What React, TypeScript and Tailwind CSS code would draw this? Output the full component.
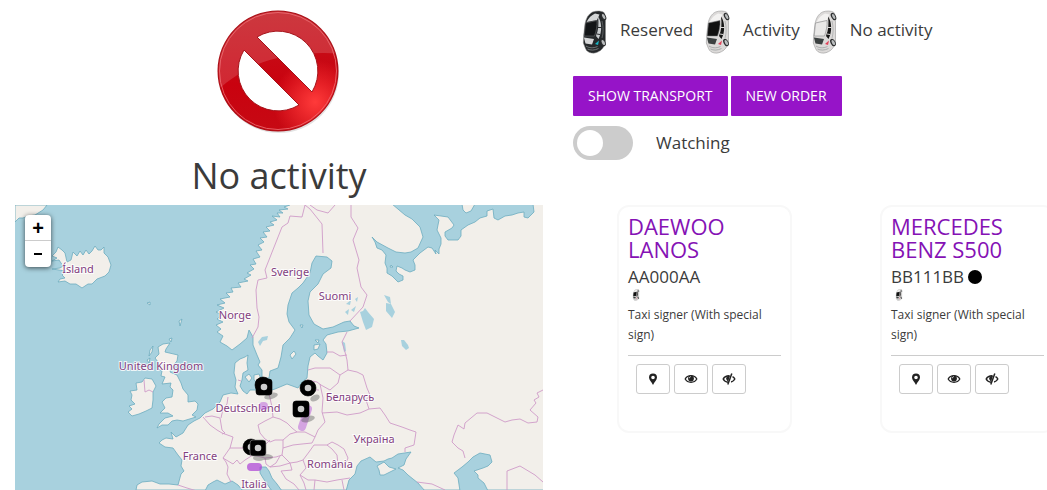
import { useState } from "react";

const LAND = [
  // continental Europe and Scandinavia
  "M290 205 L284 207 288 209 279 210 283 213 277 213 280 217 272 216 277 220 270 222 274 225 266 227 270 231 263 232 267 237 260 238 264 242 258 245 262 250 256 251 260 257 253 259 256 264 250 265 254 269 247 273 251 275 244 279 248 281 238 283 241 287 231 288 233 292 226 293 230 297 220 299 225 303 217 305 224 308 216 312 222 315 217 319 223 322 216 325 221 329 217 332 223 336 220 342 227 346 232 350 240 344 247 338 249 330 253 337 253 345 257 355 260 362 258 365 262 370 262 378 269 378 270 371 278 368 281 357 283 345 290 338 295 330 289 322 287 314 288 305 292 293 298 288 303 283 310 273 312 263 316 256 327 257 332 261 331 268 323 274 318 284 310 292 308 301 309 315 314 324 323 329 333 327 344 322 350 321 354 326 359 328 348 331 338 332 327 335 323 340 326 344 327 353 323 360 318 356 315 353 310 357 308 366 307 378 302 382 298 388 287 384 275 389 263 393 257 390 250 390 247 394 243 391 240 386 242 380 243 373 248 370 247 363 248 355 245 357 240 359 235 363 234 373 236 380 235 387 238 394 231 393 223 395 220 402 213 409 205 413 200 418 194 421 188 425 183 433 176 437 171 432 173 439 166 438 162 440 159 443 165 447 173 448 178 455 182 460 181 466 184 471 181 474 178 485 169 484 160 484 152 481 142 482 137 485 136 490 L545 490 545 203 290 203Z",
  // Great Britain, Ireland, Iceland, Greenland
  "M158 347 L163 344 170 343 166 349 165 352 178 355 177 361 172 367 170 372 177 375 181 383 183 389 188 395 188 402 195 401 198 404 197 410 192 415 196 417 183 421 177 420 172 421 168 425 162 425 157 428 159 424 165 418 173 416 168 413 160 413 165 408 162 402 166 398 172 397 173 390 170 387 171 383 162 384 165 377 161 376 162 371 157 368 158 362 155 358 159 354Z",
  "M136 383 L142 382 145 378 152 379 156 386 153 392 153 400 152 408 146 411 139 414 132 416 128 412 132 409 129 406 135 404 131 400 132 395 130 391 137 390Z",
  "M52 256 L56 252 58 247 62 250 65 253 67 262 71 260 73 252 77 256 80 251 83 255 86 250 89 254 92 251 95 246 98 250 101 250 104 247 104 253 108 257 111 265 109 272 105 276 97 279 92 284 88 284 82 288 76 284 70 284 65 281 58 282 60 279 65 278 62 275 66 271 52 269 60 268 63 266 59 260 52 261 57 258Z",
  "M15 205 L47 205 43 210 35 215 28 216 23 218 19 218 15 222Z",
  // islands
  "M245 377 L249 374 252 378 249 382Z M254 375 L259 374 261 379 258 383 254 380Z M290 355 L294 351 296 354 292 359Z M314 345 L320 344 318 349 314 350Z M315 340 L319 340 318 343Z M150 350 L153 346 152 352 149 356Z M147 360 L150 358 149 363Z M179 321 L182 319 180 326Z M169 339 L172 338 171 342Z M147 303 L150 302 150 305Z M300 325 L303 325 302 328Z",
];

const WATER = [
  // White Sea and Barents Sea
  "M392 204 L405 215 412 219 420 227 423 237 418 248 411 252 405 253 396 252 388 248 377 242 372 237 375 242 377 248 382 250 386 255 385 263 387 268 387 273 392 276 398 282 403 280 403 276 399 274 396 271 397 266 402 268 405 270 410 272 415 270 415 265 413 260 420 253 428 247 432 248 436 254 435 250 439 254 439 249 441 244 441 238 437 230 439 220 434 215 441 216 448 217 454 225 452 228 445 232 445 236 448 240 458 240 461 236 461 230 468 225 475 222 480 218 487 216 487 211 493 209 494 218 498 220 505 216 512 215 518 213 524 212 524 217 528 218 534 212 533 204Z",
  // Black Sea and Azov
  "M370 457 L376 462 384 461 388 459 392 458 398 454 411 452 406 459 404 465 398 468 403 470 408 475 418 483 425 491 346 491 349 480 355 474 357 466 361 461Z",
  // Mediterranean and Adriatic
  "M205 491 L208 485 213 482 217 480 225 484 232 481 238 485 243 491Z",
  "M260 467 L266 467 269 471 272 478 277 484 282 491 272 491 267 484 263 478 260 473Z",
  // Caspian
  "M462 467 L468 462 473 457 480 453 490 455 492 462 488 466 483 468 474 471 478 475 478 478 484 483 488 491 460 491 458 478 454 473Z",
];

const LAKES = [
  "M360 312 L363 311 365 308 368 312 374 319 372 327 366 330 363 322Z",
  "M384 295 L390 297 391 304 388 302Z M386 303 L391 304 395 312 392 318 386 311Z",
  "M401 340 L404 340 408 345 409 348 406 350 402 346Z",
  "M258 342 L262 337 268 336 267 340 263 341 260 346Z",
  "M342 341 L345 343 346 351 344 352Z",
  "M346 304 L351 300 350 305Z M351 310 L356 306 354 312Z M345 312 L349 309 348 315Z M355 299 L358 297 357 302Z",
];

const BORDERS = [
  "M305 205 L302 217 290 216 288 223 282 227 265 270 267 278 258 280 256 290 257 308 259 317 258 327 252 338",
  "M305 205 L310 209 322 224 323 253 M310 205 L317 210 328 213 335 205",
  "M351 205 L351 217 358 228 353 240 359 260 357 268 361 287 367 295 363 307 350 321",
  "M327 352 L333 352 340 356 347 355 M347 332 L342 342 345 352 347 360 348 370",
  "M308 370 L315 368 330 368 340 375 348 370 357 372 363 375 367 388 370 395 366 400 369 409",
  "M340 375 L338 383 330 390 321 385 317 382 307 380 M302 389 L319 390",
  "M320 384 L323 398 322 412 325 422 318 430 315 437",
  "M322 413 L337 412 347 415 360 413 369 409 380 408 385 415 390 423 402 427 410 430 416 432 414 445 405 448 405 452",
  "M268 390 L270 398 272 407 273 417 280 419 287 423 292 428 297 432",
  "M273 417 L265 421 258 425 260 433 265 439 270 442 275 440 283 440 290 434 297 432 305 432 315 437 312 443 302 444 293 445 283 448 283 440",
  "M283 448 L282 455 290 463 297 462 303 460 309 452 314 445 327 445 332 449 337 455 338 465 344 465",
  "M327 445 L332 442 338 445 344 449 348 458 345 465",
  "M303 460 L306 468 300 475 308 480 315 480 327 482 337 480 350 478 M300 475 L304 483 306 490",
  "M315 480 L314 490 M342 480 L344 490",
  "M203 417 L210 425 217 430 222 433 233 437 230 448 223 458 226 462 228 467 227 474 231 482",
  "M205 417 L212 416 220 418 222 430 M228 397 L227 404 223 409 221 418 M222 430 L225 433 222 434",
  "M230 448 L238 448 245 448 248 453 253 455 245 460 240 464 237 460 233 464 223 458",
  "M245 448 L255 450 264 446 270 440 M253 455 L265 458 276 457 282 455",
  "M265 458 L266 464 270 467 276 463 280 456 M270 467 L280 466 290 463 292 470 281 471 286 479 294 484 299 490",
  "M238 380 L241 381",
  "M543 390 L537 393 539 397 534 400 536 403 530 410 538 417 537 422 528 423 520 419 512 420 505 422 487 413 477 413 465 423 464 429 458 425 454 435 452 442 458 448 463 451 465 458",
  "M507 490 L507 471 520 466 535 475 543 482 M417 482 L432 484 445 490",
  "M144 380 L145 392 149 390 153 392 M178 485 L187 488 197 491",
];

const LABELS = [
  { x: 78, y: 273, text: "Ísland" },
  { x: 290, y: 276, text: "Sverige" },
  { x: 335, y: 300, text: "Suomi" },
  { x: 235, y: 319, text: "Norge" },
  { x: 161, y: 370, text: "United Kingdom" },
  { x: 350, y: 401, text: "Беларусь" },
  { x: 248, y: 412, text: "Deutschland" },
  { x: 374, y: 443, text: "Україна" },
  { x: 200, y: 460, text: "France" },
  { x: 330, y: 468, text: "România" },
  { x: 254, y: 488, text: "Italia" },
];

const MARKERS = [
  { x: 263, y: 385, round: true },
  { x: 264, y: 387, round: false },
  { x: 308, y: 388, round: true },
  { x: 301, y: 409, round: false },
  { x: 251, y: 447, round: true },
  { x: 258, y: 448, round: false },
];

const CAR_COLORS = {
  reserved: { body: "#26292b", roof: "#131517", rear: "#d4d6d7", side: "#c9ccce", front: "#d7d8d9", lamp: "#18b4c4" },
  active: { body: "#dcdad9", roof: "#111111", rear: "#f3f2f1", side: "#161616", front: "#3c4141", lamp: "#e2435a" },
  idle: { body: "#dcdad9", roof: "#e9e8e7", rear: "#f3f2f1", side: "#161616", front: "#3c4141", lamp: "#e2435a" },
};

type CarKind = keyof typeof CAR_COLORS;

const LEGEND: { kind: CarKind; label: string }[] = [
  { kind: "reserved", label: "Reserved" },
  { kind: "active", label: "Activity" },
  { kind: "idle", label: "No activity" },
];

const VEHICLES = [
  { name: "DAEWOO LANOS", plate: "AA000AA", color: "" },
  { name: "MERCEDES BENZ S500", plate: "BB111BB", color: "black" },
];

const Car = ({ kind, className }: { kind: CarKind; className: string }) => {
  const c = CAR_COLORS[kind];
  return (
    <svg viewBox="0 0 24 44" className={className} aria-hidden="true">
      <path d="M2.500 14C3.500 8 6 4 10 2 14 .5 19 .7 21.500 2.500c1.500 2 1.500 5 1.500 8L23 31c-.5 4-2 7-5 9.500-3 2-6 3-9 2.500C6 42.500 4 41 3 38.500L.8 33 1.200 25Z" fill={c.body} stroke="#8b8b8b" strokeWidth=".5" />
      <path d="M4 12C6 8 9 5 12.500 3.500L17 4.500 14.500 10Z" fill={c.rear} />
      <path d="M3 13 14.500 10.500c.5 5-.8 10.500-2.500 15.500H1.700Z" fill={c.roof} stroke="#77797a" strokeWidth=".5" />
      <path d="M1.400 27.500 11.500 29 9.500 34.500 3 33.500Z" fill={c.front} />
      <path d="M15.500 6.500c3.700 5 4.500 15 .5 22.500l-2.500-3c2.500-6 3-12 2-19.500Z" fill={c.side} />
      <path d="M15.500 17.500h3.500M14.500 24l3 .5" stroke={c.body} strokeWidth="1" />
      <path d="M19.500 11c1.500 6 1.500 12 0 17" fill="none" stroke="#8d9092" strokeWidth=".5" />
      <path d="M3.500 36c3 2 7 2.500 11.500.5M5 39c3 1.500 7 1.500 11-.5" fill="none" stroke="#94989a" strokeWidth=".7" />
      <path d="M12.500 34 16.500 30.500 15.500 35Z" fill={c.lamp} />
      <ellipse cx="21" cy="6.500" rx="2.300" ry="4" fill="#2d2f30" transform="rotate(-28 21 6.500)" />
      <ellipse cx="21.200" cy="6.500" rx="1.300" ry="2.700" fill="#b9bcbd" transform="rotate(-28 21.200 6.500)" />
      <ellipse cx="20.500" cy="32.500" rx="2.400" ry="4" fill="#2d2f30" transform="rotate(-28 20.500 32.500)" />
      <ellipse cx="20.800" cy="32.500" rx="1.400" ry="2.800" fill="#b9bcbd" transform="rotate(-28 20.800 32.500)" />
    </svg>
  );
};

const NoActivitySign = () => (
  <svg viewBox="0 0 126 126" className="size-[126px]" aria-hidden="true">
    <defs>
      <linearGradient id="red" x1="0" y1="0" x2="0" y2="1">
        <stop offset="0" stopColor="#c4161e" />
        <stop offset=".6" stopColor="#c9020f" />
        <stop offset="1" stopColor="#c60a14" />
      </linearGradient>
      <radialGradient id="glow" cx="99" cy="93" r="42" gradientUnits="userSpaceOnUse">
        <stop offset="0" stopColor="#ff3a3a" />
        <stop offset="1" stopColor="#ff3a3a" stopOpacity="0" />
      </radialGradient>
      <clipPath id="disc">
        <circle cx="62" cy="62" r="59.500" />
      </clipPath>
    </defs>
    <circle cx="63" cy="64" r="60" fill="#e3e3e3" />
    <circle cx="62" cy="62" r="60.500" fill="#a80f16" />
    <g clipPath="url(#disc)">
      <rect width="126" height="126" fill="url(#red)" />
      <rect width="126" height="126" fill="url(#glow)" />
      <path d="M0 0H126V45C100 42 62 46 40 56 24 63 12 72 3 80Z" fill="white" opacity=".15" />
      <circle cx="62" cy="62" r="58.500" fill="none" stroke="#ee7277" strokeWidth="1" opacity=".8" />
    </g>
    <g fill="white" stroke="#a5141b" strokeWidth="1" strokeLinejoin="round">
      <path d="M41 28A40 40 0 0 1 96 83Z" />
      <path d="M28 41A40 40 0 0 0 83 96Z" />
    </g>
  </svg>
);

const EuropeMap = () => (
  <div className="relative w-full">
    <svg viewBox="15 205 528 285" className="block w-full" role="img" aria-label="Map of Europe">
      <rect x="15" y="205" width="528" height="285" fill="#a8d1de" />
      <g stroke="#6cacbf" strokeWidth=".8" strokeLinejoin="round">
        {LAND.map((d) => (
          <path key={d} d={d} fill="#f2efea" />
        ))}
        {WATER.map((d) => (
          <path key={d} d={d} fill="#a8d1de" />
        ))}
        <path d="M377 466 384 462 389 467 396 469 390 472 384 475 380 475 379 470Z M462 204 463 210 466 213 471 211 475 204Z M391 265 393 267 390 267Z" fill="#f2efea" />
      </g>
      {LAKES.map((d) => (
        <path key={d} d={d} fill="#a8d1de" />
      ))}
      {BORDERS.map((d) => (
        <path key={d} d={d} fill="none" stroke="#cf9bc8" strokeWidth=".9" strokeLinejoin="round" />
      ))}
      {LABELS.map((label) => (
        <text
          key={label.text}
          x={label.x}
          y={label.y}
          textAnchor="middle"
          className="fill-[#83407f] stroke-white/80 stroke-2 font-['Noto_Sans',sans-serif] text-[11px] [paint-order:stroke]"
        >
          {label.text}
        </text>
      ))}
      <g stroke="#b04ad8" strokeLinecap="round" strokeWidth="8">
        <path d="M263 406h1" opacity=".45" />
        <path d="M308 409 302 427" opacity=".45" />
        <path d="M251 467h7" opacity=".75" />
      </g>
      <g fill="#555555" opacity=".4">
        <ellipse cx="271" cy="396" rx="7" ry="3" transform="rotate(-15 271 396)" />
        <ellipse cx="315" cy="398" rx="5" ry="3" transform="rotate(-25 315 398)" />
        <ellipse cx="308" cy="419" rx="7" ry="3" transform="rotate(-15 308 419)" />
        <ellipse cx="259" cy="458" rx="6" ry="3" />
        <ellipse cx="266" cy="457" rx="7" ry="3" />
      </g>
      {MARKERS.map((m) => (
        <g key={`${m.x}-${m.y}`}>
          <rect x={m.x - 8} y={m.y - 8} width="16" height="16" rx={m.round ? 8 : 3} fill="#000000" stroke={m.x === 258 ? "#8a8a8a" : "#000000"} strokeWidth=".6" />
          <circle cx={m.x} cy={m.y} r="3.300" fill="#cccccc" />
        </g>
      ))}
    </svg>
    <div className="absolute left-2.5 top-2.5 w-[26px] overflow-hidden rounded bg-white font-['Liberation_Sans',sans-serif] text-xl leading-[26px] font-bold text-black shadow-[0_1px_5px_rgba(0,0,0,0.65)]">
      <button type="button" aria-label="Zoom in" className="flex h-[26px] w-full items-center justify-center border-b border-[#cccccc]">
        +
      </button>
      <button type="button" aria-label="Zoom out" className="flex h-[26px] w-full items-center justify-center">
        <svg viewBox="0 0 10 10" className="size-2.5" aria-hidden="true">
          <path d="M1 4h8v2H1z" />
        </svg>
      </button>
    </div>
  </div>
);

const PinIcon = () => (
  <svg viewBox="0 0 14 14" className="size-3.5" aria-hidden="true">
    <path fillRule="evenodd" d="M7 1.500a4 4 0 0 1 4 4C11 8 8.500 9.800 7 13 5.500 9.800 3 8 3 5.500a4 4 0 0 1 4-4Zm0 2.200a1.800 1.800 0 1 0 0 3.600 1.800 1.800 0 0 0 0-3.600Z" fill="#222222" />
  </svg>
);

const EyeIcon = () => (
  <svg viewBox="0 0 14 14" className="size-3.5" aria-hidden="true">
    <path d="M1.200 7C3.500 2.500 10.500 2.500 12.800 7 10.500 11.300 3.500 11.300 1.200 7Z" fill="white" stroke="#222222" strokeWidth="1.300" />
    <circle cx="7" cy="6.400" r="2.900" fill="#222222" />
    <path d="M5.400 6.200C5.400 5.200 6 4.700 6.900 4.700" fill="none" stroke="white" strokeWidth=".8" />
  </svg>
);

const EyeCloseIcon = () => (
  <svg viewBox="0 0 14 14" className="size-3.5" aria-hidden="true">
    <path d="M7.500 3.700C4.500 3.600 2.200 5 1.200 7c.9 1.900 2.800 3.100 5 3.300M10.500 4.700C11.600 5.300 12.300 6.100 12.800 7c-.7 1.400-2 2.500-3.700 3" fill="none" stroke="#222222" strokeWidth="1.500" />
    <path d="M8 3.800C5.500 3.700 4.200 4.700 4.200 6.500 4.200 8 5.200 9 6.200 9.400Z" fill="#222222" />
    <path d="M9.800 1.500 5.800 12.500" stroke="#222222" strokeWidth="1.500" />
  </svg>
);

const ACTIONS = [
  { label: "Show on map", Icon: PinIcon },
  { label: "Watch", Icon: EyeIcon },
  { label: "Stop watching", Icon: EyeCloseIcon },
];

const VehicleCard = ({ name, plate, color }: (typeof VEHICLES)[number]) => (
  <article className="min-h-[228px] w-[175px] rounded-xl border-2 border-[#f8f8f8] px-[9px] py-2">
    <h2 className="text-[22px] leading-[23px] text-[#8512b5]">{name}</h2>
    <p className="mt-1 flex items-center gap-1 text-[17px] leading-6">
      {plate}
      {color && <span className="size-3.5 rounded-full bg-black" />}
    </p>
    <Car kind="active" className="ml-1 h-3 w-2" />
    <p className="mt-1 text-xs leading-5">Taxi signer (With special sign)</p>
    <hr className="mt-2.5 border-[#cccccc]" />
    <div className="mt-2 flex gap-1 pl-2">
      {ACTIONS.map(({ label, Icon }) => (
        <button
          key={label}
          type="button"
          aria-label={label}
          className="flex h-[30px] w-[34px] items-center justify-center rounded-[3px] border border-[#cccccc] bg-white"
        >
          <Icon />
        </button>
      ))}
    </div>
  </article>
);

export default function App() {
  const [watching, setWatching] = useState(false);

  return (
    <div className="overflow-hidden bg-white font-['Open_Sans',sans-serif] text-[#3b3b3b]">
      <main className="grid min-w-[1116px] grid-cols-2 gap-[30px] px-[15px]">
        <section>
          <header className="flex flex-col items-center pt-[9px]">
            <NoActivitySign />
            <h1 className="mt-[19px] text-4xl leading-[44px]">No activity</h1>
          </header>
          <div className="mt-[7px]">
            <EuropeMap />
          </div>
        </section>

        <section>
          <ul className="flex gap-[3px] pt-2 text-[17px] leading-[44px]">
            {LEGEND.map(({ kind, label }) => (
              <li key={kind} className="flex items-start">
                <Car kind={kind} className="mr-1 h-12 w-[43px] py-0.5" />
                {label}
              </li>
            ))}
          </ul>
          <div className="mt-5 flex gap-[3px] text-sm font-medium text-white">
            <button type="button" className="h-10 rounded-[1px] bg-[#9614c8] px-[15px]">
              SHOW TRANSPORT
            </button>
            <button type="button" className="h-10 rounded-[1px] bg-[#9614c8] px-[15px]">
              NEW ORDER
            </button>
          </div>
          <label className="mt-2.5 flex w-fit cursor-pointer items-center gap-[23px] text-[17px] leading-[34px]">
            <input
              type="checkbox"
              checked={watching}
              onChange={(event) => setWatching(event.target.checked)}
              className="h-[34px] w-[60px] cursor-pointer appearance-none rounded-full bg-[#cccccc] p-1 before:block before:size-[26px] before:rounded-full before:bg-white before:transition-transform checked:bg-[#9614c8] checked:before:translate-x-[26px]"
            />
            Watching
          </label>
          <div className="mt-[45px] mr-0.5 grid grid-cols-2 justify-items-center">
            {VEHICLES.map((vehicle) => (
              <VehicleCard key={vehicle.plate} {...vehicle} />
            ))}
          </div>
        </section>
      </main>
    </div>
  );
}
